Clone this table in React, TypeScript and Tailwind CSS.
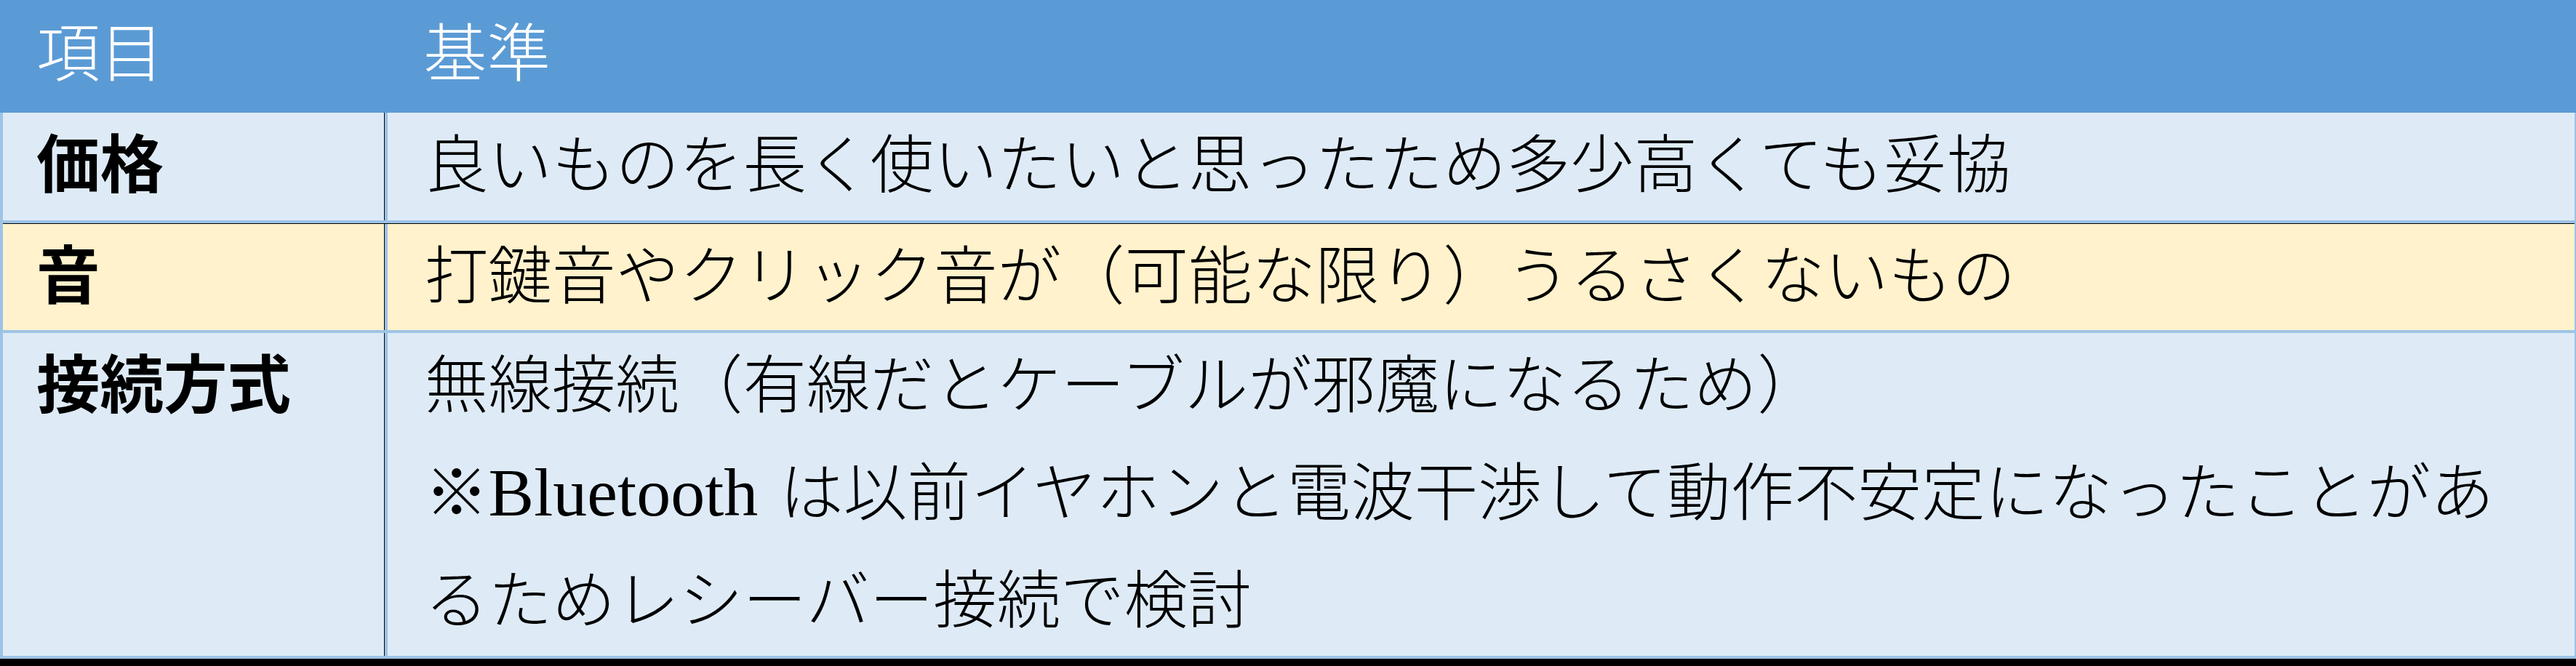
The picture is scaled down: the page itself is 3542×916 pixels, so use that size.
const FONT = "font-['Liberation_Serif','Noto_Sans_CJK_JP',serif]";

type Row = {
  label: string;
  lines: React.ReactNode[];
  bg: string;
  height: string;
  topRule?: boolean;
};

const rows: Row[] = [
  {
    label: "価格",
    lines: ["良いものを長く使いたいと思ったため多少高くても妥協"],
    bg: "bg-[#deebf7]",
    height: "h-[148px]",
  },
  {
    label: "音",
    lines: ["打鍵音やクリック音が（可能な限り）うるさくないもの"],
    bg: "bg-[#fff2cc]",
    height: "h-[147px]",
    topRule: true,
  },
  {
    label: "接続方式",
    lines: [
      "無線接続（有線だとケーブルが邪魔になるため）",
      <>
        ※<span className="text-[94px] leading-none mr-[30px]">Bluetooth</span>
        は以前イヤホンと電波干渉して動作不安定になったことがあ
      </>,
      "るためレシーバー接続で検討",
    ],
    bg: "bg-[#deebf7]",
    height: "h-[444px]",
  },
];

export default function App() {
  return (
    <div className={`w-[3542px] h-[916px] bg-black ${FONT} text-[87.5px] font-light`}>
      {/* Header */}
      <div className="flex h-[155px] items-center bg-[#5b9bd5] text-white leading-[148px]">
        <div className="w-[530px] pl-[50px] pb-[4px]">項目</div>
        <div className="pl-[52px] pb-[4px]">基準</div>
      </div>

      {/* Body */}
      <div className="flex flex-col gap-[4px] bg-[#9dc3e6] pl-[4px] pr-[2px] pb-[4px]">
        {rows.map((row) => (
          <div
            key={row.label}
            className={`flex ${row.height} ${row.topRule ? "border-t border-black" : ""} text-black leading-[148px]`}
          >
            <div className={`w-[525px] ${row.bg} border-r border-black pl-[46px] font-bold`}>
              {row.label}
            </div>
            <div className={`ml-[4px] flex-1 ${row.bg} pl-[51px]`}>
              {row.lines.map((line, i) => (
                <div key={i} className="whitespace-nowrap">
                  {line}
                </div>
              ))}
            </div>
          </div>
        ))}
      </div>
    </div>
  );
}
